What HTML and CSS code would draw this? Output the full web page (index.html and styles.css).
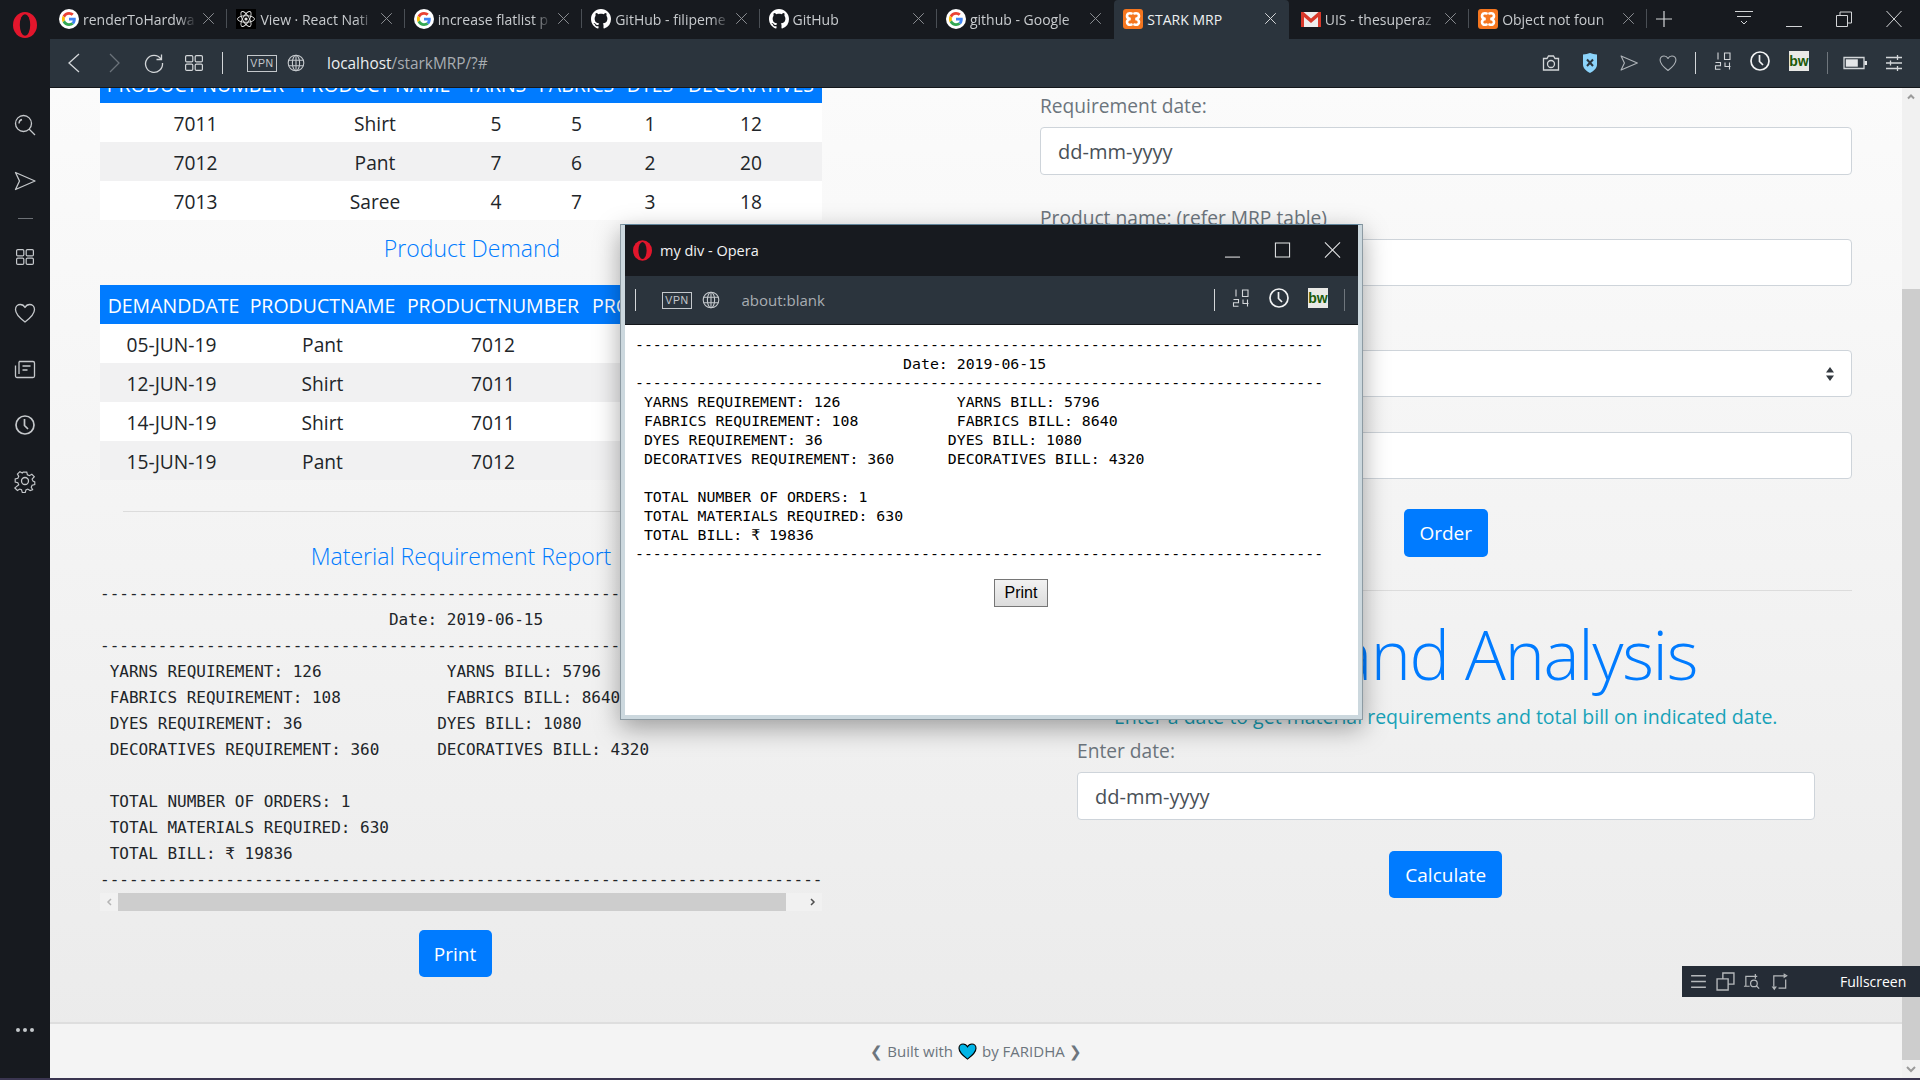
FILE: index.html
```html
<!DOCTYPE html>
<html lang="en">
<head>
    <meta charset="utf-8">
    <title>STARK MRP</title>
    <link rel="stylesheet" href="styles.css">
</head>
<body>
<svg class="defs" width="0" height="0">
    <symbol id="i-google" viewBox="-10 -10 68 68">
        <circle cx="24" cy="24" r="34" fill="#fff"/>
        <path fill="#EA4335" d="M24 9.5c3.54 0 6.71 1.22 9.21 3.6l6.85-6.85C35.9 2.38 30.47 0 24 0 14.62 0 6.51 5.38 2.56 13.22l7.98 6.19C12.43 13.72 17.74 9.5 24 9.5z"/>
        <path fill="#4285F4" d="M46.98 24.55c0-1.57-.15-3.09-.38-4.55H24v9.02h12.94c-.58 2.96-2.26 5.48-4.78 7.18l7.73 6c4.51-4.18 7.09-10.36 7.09-17.65z"/>
        <path fill="#FBBC05" d="M10.53 28.59c-.48-1.45-.76-2.99-.76-4.59s.27-3.14.76-4.59l-7.98-6.19C.92 16.46 0 20.12 0 24c0 3.88.92 7.54 2.56 10.78l7.97-6.19z"/>
        <path fill="#34A853" d="M24 48c6.48 0 11.93-2.13 15.89-5.81l-7.73-6c-2.15 1.45-4.92 2.3-8.16 2.3-6.26 0-11.57-4.22-13.47-9.91l-7.98 6.19C6.51 42.62 14.62 48 24 48z"/>
    </symbol>
    <symbol id="i-github" viewBox="0 0 16 16">
        <path fill="#fff" d="M8 0C3.58 0 0 3.58 0 8c0 3.54 2.29 6.53 5.47 7.59.4.07.55-.17.55-.38 0-.19-.01-.82-.01-1.49-2.01.37-2.53-.49-2.69-.94-.09-.23-.48-.94-.82-1.13-.28-.15-.68-.52-.01-.53.63-.01 1.08.58 1.23.82.72 1.21 1.87.87 2.33.66.07-.52.28-.87.51-1.07-1.78-.2-3.64-.89-3.64-3.95 0-.87.31-1.59.82-2.15-.08-.2-.36-1.02.08-2.12 0 0 .67-.21 2.2.82.64-.18 1.32-.27 2-.27.68 0 1.36.09 2 .27 1.53-1.04 2.2-.82 2.2-.82.44 1.1.16 1.92.08 2.12.51.56.82 1.27.82 2.15 0 3.07-1.87 3.75-3.65 3.95.29.25.54.73.54 1.48 0 1.07-.01 1.93-.01 2.2 0 .21.15.46.55.38A8.013 8.013 0 0016 8c0-4.42-3.58-8-8-8z"/>
    </symbol>
    <symbol id="i-react" viewBox="0 0 20 20">
        <rect width="20" height="20" fill="#000"/>
        <g fill="none" stroke="#e4e4e4" stroke-width=".9">
            <ellipse cx="10" cy="10" rx="8.5" ry="3.3"/>
            <ellipse cx="10" cy="10" rx="8.5" ry="3.3" transform="rotate(60 10 10)"/>
            <ellipse cx="10" cy="10" rx="8.5" ry="3.3" transform="rotate(120 10 10)"/>
        </g>
        <circle cx="10" cy="10" r="1.6" fill="#e4e4e4"/>
    </symbol>
    <symbol id="i-xampp" viewBox="0 0 20 20">
        <rect width="20" height="20" rx="3" fill="#f5761f"/>
        <path fill="none" stroke="#fff" stroke-width="2.6" stroke-linecap="round" d="M8.6 4.5C5.5 3.6 4 5 4 7c0 1.6 1.4 2.7 3.6 3-2.2.3-3.6 1.4-3.6 3 0 2 1.500 3.400 4.600 2.500M11.400 4.500C14.500 3.600 16 5 16 7c0 1.600-1.400 2.700-3.600 3 2.200.3 3.600 1.400 3.600 3 0 2-1.500 3.400-4.600 2.500"/>
    </symbol>
    <symbol id="i-gmail" viewBox="0 0 20 20">
        <rect y="3" width="20" height="15" fill="#eee"/>
        <path fill="#d8392b" d="M0 3h2.500L10 9.500 17.500 3H20v15h-3V8l-7 6-7-6v10H0z"/>
    </symbol>
    <symbol id="i-x" viewBox="0 0 16 16">
        <path fill="none" stroke="currentColor" stroke-width="1.200" d="M1.500 1.500l13 13M14.500 1.500l-13 13"/>
    </symbol>
    <symbol id="i-globe" viewBox="0 0 18 18">
        <g fill="none" stroke="currentColor" stroke-width="1.100">
            <circle cx="9" cy="9" r="7.800"/>
            <ellipse cx="9" cy="9" rx="3.600" ry="7.800"/>
            <path d="M1.500 6.300h15M1.500 11.700h15M9 1.200v15.600"/>
        </g>
    </symbol>
    <symbol id="i-clock" viewBox="0 0 24 24">
        <circle cx="12" cy="12" r="9" fill="none" stroke="currentColor" stroke-width="1.700"/>
        <path fill="none" stroke="currentColor" stroke-width="1.700" d="M11.500 6v6.500l3.500 3.500"/>
    </symbol>
    <symbol id="i-send" viewBox="0 0 24 24">
        <path fill="none" stroke="currentColor" stroke-width="1.300" stroke-linejoin="round" d="M2.500 3.500L22 12 2.500 20.500 6.500 12z"/>
    </symbol>
    <symbol id="i-heart" viewBox="0 0 24 24">
        <path fill="none" stroke="currentColor" stroke-width="1.300" stroke-linejoin="round" d="M12 21C6 16.500 2.500 13 2.500 8.500 2.500 5.300 5 3.500 7.300 3.500c2 0 3.700 1 4.700 3 1-2 2.700-3 4.700-3 2.300 0 4.800 1.800 4.800 5 0 4.500-3.500 8-9.500 12.500z"/>
    </symbol>
    <symbol id="i-grid" viewBox="0 0 18 16">
        <g fill="none" stroke="currentColor" stroke-width="1.200">
            <rect x=".6" y=".6" width="7.200" height="6.300" rx="1.200"/>
            <rect x="10.200" y=".6" width="7.200" height="6.300" rx="1.200"/>
            <rect x=".6" y="9.100" width="7.200" height="6.300" rx="1.200"/>
            <rect x="10.200" y="9.100" width="7.200" height="6.300" rx="1.200"/>
        </g>
    </symbol>
    <symbol id="i-1024" viewBox="0 0 18 18">
        <path fill="none" stroke="currentColor" stroke-width="1.100" d="M4 .5v7M10.500 1h5.500v6.500h-5.500zM1.500 10.500h5v3.200h-5v3.500h5M11 10.500v4h5.500M15.500 10.500v7"/>
    </symbol>
    <symbol id="i-opera" viewBox="0 0 24 26">
        <ellipse cx="12" cy="13" rx="12" ry="13" fill="#e2162c"/>
        <ellipse cx="12" cy="13" rx="5.200" ry="10.800" fill="#171a1f"/>
    </symbol>
</svg>

<div class="browser">
    <header class="tabstrip">
        <svg class="opera-logo"><use href="#i-opera"/></svg>
        <div class="tab"><svg class="fav"><use href="#i-google"/></svg><span class="tab-title">renderToHardwa</span><svg class="tab-x"><use href="#i-x"/></svg></div>
        <div class="tab"><svg class="fav"><use href="#i-react"/></svg><span class="tab-title">View · React Nati</span><svg class="tab-x"><use href="#i-x"/></svg></div>
        <div class="tab"><svg class="fav"><use href="#i-google"/></svg><span class="tab-title">increase flatlist p</span><svg class="tab-x"><use href="#i-x"/></svg></div>
        <div class="tab"><svg class="fav"><use href="#i-github"/></svg><span class="tab-title">GitHub - filipeme</span><svg class="tab-x"><use href="#i-x"/></svg></div>
        <div class="tab"><svg class="fav"><use href="#i-github"/></svg><span class="tab-title">GitHub</span><svg class="tab-x"><use href="#i-x"/></svg></div>
        <div class="tab no-sep"><svg class="fav"><use href="#i-google"/></svg><span class="tab-title">github - Google</span><svg class="tab-x"><use href="#i-x"/></svg></div>
        <div class="tab tab--active"><svg class="fav"><use href="#i-xampp"/></svg><span class="tab-title">STARK MRP</span><svg class="tab-x"><use href="#i-x"/></svg></div>
        <div class="tab"><svg class="fav"><use href="#i-gmail"/></svg><span class="tab-title">UIS - thesuperaz</span><svg class="tab-x"><use href="#i-x"/></svg></div>
        <div class="tab"><svg class="fav"><use href="#i-xampp"/></svg><span class="tab-title">Object not foun</span><svg class="tab-x"><use href="#i-x"/></svg></div>
        <svg class="new-tab" viewBox="0 0 16 16"><path d="M8 0v16M0 8h16"/></svg>
        <div class="win-controls">
            <svg class="ctl" viewBox="0 0 18 16"><path d="M0 .5h18M2 5.500h14M6 10l3 3 3-3"/></svg>
            <svg class="ctl" viewBox="0 0 18 16"><path d="M1 15.500h16"/></svg>
            <svg class="ctl" viewBox="0 0 18 16"><path d="M1.500 4.500h11v11h-11zM5 4.500V1h11.500v11h-4"/></svg>
            <svg class="ctl" viewBox="0 0 18 16"><path d="M1.500 0l15 16M16.500 0l-15 16"/></svg>
        </div>
    </header>

    <aside class="sidebar">
        <svg class="side-icon" viewBox="0 0 24 24"><circle cx="10.500" cy="10.500" r="8"/><path d="M16 16l6 6M6 10.500c0-2 1-3.500 3-4"/></svg>
        <svg class="side-icon"><use href="#i-send"/></svg>
        <div class="side-dash"></div>
        <svg class="side-icon side-icon--small"><use href="#i-grid"/></svg>
        <svg class="side-icon"><use href="#i-heart"/></svg>
        <svg class="side-icon" viewBox="0 0 24 24"><path d="M6 4.500h14a1.500 1.500 0 0 1 1.500 1.500v13a1.500 1.500 0 0 1-1.500 1.500H4A1.500 1.500 0 0 1 2.500 19V8.500M6 4.500V17M9.500 9h8M9.500 13h5"/></svg>
        <svg class="side-icon side-icon--clock"><use href="#i-clock"/></svg>
        <svg class="side-icon" viewBox="0 0 24 24"><circle cx="12" cy="12" r="3.500"/><path d="M10 2h4l.7 3 2.300 1 2.700-1.600 2.800 2.800L20 10l1 2.200 2 .8v3l-3 .8-1 2.300 1.600 2.700-2.800 1-2.700-1.700-2 .9-.8 2.900h-3.300l-.9-3-2-.8-2.600 1.500-2.900-2.800L5 16.200 4 14l-3-.7v-3.600l3-.7 1-2.200-1.500-2.600 2.800-2.700L9 3z" transform="translate(1.300 1.300) scale(.89)"/></svg>
        <div class="side-dots"><i></i><i></i><i></i></div>
    </aside>

    <main class="main">
        <nav class="toolbar">
            <svg class="tb-icon" viewBox="0 0 24 24"><path d="M17 3L7 12l10 9"/></svg>
            <svg class="tb-icon tb-icon--off" viewBox="0 0 24 24"><path d="M8 3l9 9-9 9"/></svg>
            <svg class="tb-icon" viewBox="0 0 24 24"><path d="M19 8A8.500 8.500 0 1 0 20.500 12M19.500 3.500V8.500H14.500"/></svg>
            <svg class="tb-icon tb-icon--grid"><use href="#i-grid"/></svg>
            <span class="tb-sep"></span>
            <span class="vpn-badge">VPN</span>
            <svg class="tb-globe"><use href="#i-globe"/></svg>
            <div class="url"><b>localhost</b>/starkMRP/?#</div>
            <div class="tb-right">
                <svg class="tb-icon" viewBox="0 0 24 24"><path d="M4.500 7.500h3.500l1.500-2.500h5l1.500 2.500h3.500v11.500h-15z"/><circle cx="12" cy="13" r="3.500"/></svg>
                <svg class="tb-icon tb-shield" viewBox="0 0 24 24"><path d="M5 3.500c3 0 4.500-1 7-1.500 2.500.5 4 1.500 7 1.500v10c0 4-3.500 6.500-7 8.500-3.500-2-7-4.500-7-8.500z"/><path class="shield-x" d="M9 8.500l6 6.500M15 8.500l-6 6.500"/></svg>
                <svg class="tb-small"><use href="#i-send"/></svg>
                <svg class="tb-small"><use href="#i-heart"/></svg>
                <span class="tb-sep"></span>
                <svg class="tb-1024"><use href="#i-1024"/></svg>
                <svg class="tb-clock"><use href="#i-clock"/></svg>
                <span class="bw-badge">bw</span>
                <span class="tb-sep tb-sep--dim"></span>
                <svg class="tb-icon tb-battery" viewBox="0 0 24 24"><path d="M1 6.500h20v11H1z"/><rect class="fill" x="2.800" y="8.300" width="12" height="7.400"/><rect class="fill" x="21.500" y="10" width="2.500" height="4"/></svg>
                <svg class="tb-icon" viewBox="0 0 24 24"><path d="M4 6.500h16M4 12h16M4 17.500h16M15.500 4v5M8.500 9.500v5M15.500 15v5"/></svg>
            </div>
        </nav>

        <div class="page">
            <div class="page-scroll">
                <div class="columns">
                    <section class="col-left">
                        <table class="data data--mrp">
                            <colgroup><col class="c1"><col class="c2"><col class="c3"><col class="c4"><col class="c5"><col class="c6"></colgroup>
                            <tr><th>PRODUCT NUMBER</th><th>PRODUCT NAME</th><th>YARNS</th><th>FABRICS</th><th>DYES</th><th>DECORATIVES</th></tr>
                            <tr><td>7011</td><td>Shirt</td><td>5</td><td>5</td><td>1</td><td>12</td></tr>
                            <tr><td>7012</td><td>Pant</td><td>7</td><td>6</td><td>2</td><td>20</td></tr>
                            <tr><td>7013</td><td>Saree</td><td>4</td><td>7</td><td>3</td><td>18</td></tr>
                        </table>

                        <h3 class="section-title title-demand">Product Demand</h3>

                        <table class="data data--demand">
                            <colgroup><col class="d1"><col class="d2"><col class="d3"><col class="d4"></colgroup>
                            <tr><th>DEMANDDATE</th><th>PRODUCTNAME</th><th>PRODUCTNUMBER</th><th class="th-left">PRODUCT</th></tr>
                            <tr><td>05-JUN-19</td><td>Pant</td><td>7012</td><td></td></tr>
                            <tr><td>12-JUN-19</td><td>Shirt</td><td>7011</td><td></td></tr>
                            <tr><td>14-JUN-19</td><td>Shirt</td><td>7011</td><td></td></tr>
                            <tr><td>15-JUN-19</td><td>Pant</td><td>7012</td><td></td></tr>
                        </table>

                        <hr class="rule rule--left">

                        <h3 class="section-title title-report">Material Requirement Report</h3>

                        <pre class="report">------------------------------------------------------------------------------
                              Date: 2019-06-15
------------------------------------------------------------------------------
 YARNS REQUIREMENT: 126             YARNS BILL: 5796
 FABRICS REQUIREMENT: 108           FABRICS BILL: 8640
 DYES REQUIREMENT: 36              DYES BILL: 1080
 DECORATIVES REQUIREMENT: 360      DECORATIVES BILL: 4320

 TOTAL NUMBER OF ORDERS: 1
 TOTAL MATERIALS REQUIRED: 630
 TOTAL BILL: ₹ 19836
------------------------------------------------------------------------------</pre>
                        <div class="hscroll">
                            <svg class="hscroll-arrow hscroll-arrow--off" viewBox="0 0 18 18"><path d="M11 6l-3 3 3 3"/></svg>
                            <div class="hscroll-thumb"></div>
                            <svg class="hscroll-arrow" viewBox="0 0 18 18"><path d="M7 6l3 3-3 3"/></svg>
                        </div>
                        <div class="btn-row"><button class="btn btn--print">Print</button></div>
                    </section>

                    <section class="col-right">
                        <div class="group">
                            <label>Requirement date:</label>
                            <input class="field" type="text" value="dd-mm-yyyy">
                        </div>
                        <div class="group">
                            <label>Product name: (refer MRP table)</label>
                            <input class="field field--thin" type="text">
                        </div>
                        <div class="field field--thin field--select">
                            <svg viewBox="0 0 10 16"><path d="M5 1l4 5.500H1zM5 15L1 9.500h8z"/></svg>
                        </div>
                        <input class="field field--thin field--last" type="text">
                        <div class="btn-row btn-row--order"><button class="btn btn--order">Order</button></div>
                        <hr class="rule rule--right">
                        <div class="jumbo">
                            <h1>Demand Analysis</h1>
                            <p class="lead">Enter a date to get material requirements and total bill on indicated date.</p>
                            <div class="group group--inset">
                                <label>Enter date:</label>
                                <input class="field" type="text" value="dd-mm-yyyy">
                            </div>
                            <div class="btn-row btn-row--calc"><button class="btn btn--calc">Calculate</button></div>
                        </div>
                    </section>
                </div>
                <footer class="footer">❮ Built with <svg class="footer-heart" viewBox="0 0 20 18"><path d="M10 17C5 13 1 10 1 5.500 1 2.800 3 1 5.300 1 7.300 1 9 2.200 10 4c1-1.800 2.700-3 4.700-3C17 1 19 2.800 19 5.500 19 10 15 13 10 17z"/></svg> by FARIDHA ❯</footer>
            </div>
            <div class="vscroll">
                <svg class="vscroll-arrow" viewBox="0 0 18 18"><path d="M6 10.500l3-3 3 3"/></svg>
                <div class="vscroll-gap"></div>
                <div class="vscroll-thumb"></div>
                <svg class="vscroll-arrow" viewBox="0 0 18 18"><path d="M5 7l4 4 4-4"/></svg>
            </div>
        </div>
    </main>
    <div class="taskbar-edge"></div>

    <div class="fullscreen-bar">
        <svg viewBox="0 0 18 18"><path d="M2 3.500h14M2 9h14M2 14.500h14"/></svg>
        <svg viewBox="0 0 18 18"><path d="M1 6.500h10.500V17H1zM6.500 6.500V1H17v10.500h-5.500"/></svg>
        <svg viewBox="0 0 20 18"><path d="M3 14V3.500h12M13 1v5M1 14h6"/><circle cx="11.500" cy="11" r="3.500"/><path d="M14 13.500l3 3"/></svg>
        <svg viewBox="0 0 20 18"><path d="M4 14V3h11M3 15l1.500 2L6 15zM15 1.500L17.500 3 15 4.500zM9 16h7.500V7"/></svg>
        <span>Fullscreen</span>
    </div>

    <div class="popup">
        <div class="popup-title">
            <svg class="popup-logo"><use href="#i-opera"/></svg>
            <span>my div - Opera</span>
            <div class="popup-controls">
                <svg viewBox="0 0 18 16"><path d="M1 15.500h16"/></svg>
                <svg viewBox="0 0 18 16"><path d="M1.500 .5h15v15h-15z"/></svg>
                <svg viewBox="0 0 18 16"><path d="M1 0l16 16M17 0L1 16"/></svg>
            </div>
        </div>
        <div class="popup-toolbar">
            <span class="tb-sep"></span>
            <span class="vpn-badge">VPN</span>
            <svg class="tb-globe"><use href="#i-globe"/></svg>
            <div class="popup-url">about:blank</div>
            <span class="tb-sep popup-sep-right"></span>
            <svg class="tb-1024"><use href="#i-1024"/></svg>
            <svg class="tb-clock"><use href="#i-clock"/></svg>
            <span class="bw-badge">bw</span>
            <span class="tb-sep tb-sep--dim"></span>
        </div>
        <div class="popup-body">
            <pre class="popup-report">-----------------------------------------------------------------------------
                              Date: 2019-06-15
-----------------------------------------------------------------------------
 YARNS REQUIREMENT: 126             YARNS BILL: 5796
 FABRICS REQUIREMENT: 108           FABRICS BILL: 8640
 DYES REQUIREMENT: 36              DYES BILL: 1080
 DECORATIVES REQUIREMENT: 360      DECORATIVES BILL: 4320

 TOTAL NUMBER OF ORDERS: 1
 TOTAL MATERIALS REQUIRED: 630
 TOTAL BILL: ₹ 19836
-----------------------------------------------------------------------------</pre>
            <button class="popup-print">Print</button>
        </div>
    </div>
</div>
</body>
</html>
```

FILE: styles.css
```css
html, body {
    margin: 0;
    height: 100%;
    overflow: hidden;
    font-family: "Open Sans", "Noto Sans", sans-serif;
    color: #212529;
}
.defs {
    position: absolute;
}
.browser {
    position: relative;
    display: grid;
    grid-template-columns: 50px 1fr;
    grid-template-rows: 39px 1fr 2px;
    width: 1920px;
    height: 1080px;
    background: #171a1f;
}

/* tab strip */
.tabstrip {
    grid-column: 1 / 3;
    display: flex;
    align-items: flex-start;
    padding-left: 50px;
    position: relative;
    background: #171a1f;
}
.opera-logo {
    position: absolute;
    left: 13px;
    top: 12px;
    width: 24px;
    height: 26px;
}
.tab {
    display: flex;
    align-items: center;
    box-sizing: border-box;
    flex: none;
    width: 177.4px;
    height: 39px;
    padding: 0 12px 0 9px;
    position: relative;
    color: #c8cbce;
    font-size: 14px;
}
.tab::after {
    content: "";
    position: absolute;
    right: 0;
    top: 9px;
    height: 19px;
    width: 1px;
    background: #4a4f55;
}
.tab.no-sep::after, .tab--active::after {
    display: none;
}
.tab--active {
    background: #2b343d;
    border-radius: 4px 4px 0 0;
    color: #eef0f1;
    width: 175px;
    margin-right: 2.4px;
}
.fav {
    flex: none;
    width: 20px;
    height: 20px;
    margin-top: -2px;
}
.tab-title {
    flex: 1;
    margin-left: 4px;
    overflow: hidden;
    white-space: nowrap;
    margin-top: -1px;
    -webkit-mask-image: linear-gradient(90deg, #000 82%, transparent 98%);
    mask-image: linear-gradient(90deg, #000 82%, transparent 98%);
}
.tab--active .tab-title {
    -webkit-mask-image: none;
    mask-image: none;
}
.tab-x {
    flex: none;
    width: 13px;
    height: 13px;
    margin-left: 3px;
    margin-top: -2px;
    color: #8d9094;
}
.tab--active .tab-x {
    color: #d8dadc;
}
.new-tab {
    width: 16px;
    height: 16px;
    margin: 11px 0 0 9px;
    fill: none;
    stroke: #d3d5d7;
    stroke-width: 1.2;
}
.win-controls {
    margin-left: auto;
    margin-right: 17px;
    margin-top: 11px;
    display: flex;
    gap: 32px;
}
.ctl {
    width: 18px;
    height: 16px;
    fill: none;
    stroke: #d3d5d7;
    stroke-width: 1;
}

/* left sidebar */
.sidebar {
    display: flex;
    flex-direction: column;
    align-items: center;
    padding-top: 74px;
    padding-bottom: 46px;
    background: #171a1f;
    color: #c5c8cb;
}
.side-icon {
    width: 24px;
    height: 24px;
    margin-bottom: 32px;
    fill: none;
    stroke: #c5c8cb;
    stroke-width: 1.300;
    flex: none;
}
.side-icon--small {
    width: 18px;
    stroke: none;
}
.side-icon--clock {
    stroke: none;
}
.side-dash {
    width: 15px;
    height: 1px;
    margin: -7px 0 26px;
    background: #6d7176;
}
.side-dots {
    margin-top: auto;
    display: flex;
    gap: 3px;
}
.side-dots i {
    width: 4px;
    height: 4px;
    border-radius: 2px;
    background: #c5c8cb;
}

/* main toolbar */
.main {
    display: flex;
    flex-direction: column;
    min-width: 0;
    min-height: 0;
}
.toolbar {
    display: flex;
    align-items: center;
    flex: none;
    box-sizing: border-box;
    height: 49px;
    padding: 0 14px 0 12px;
    gap: 16px;
    background: #2b343d;
    border-bottom: 1px solid #14171b;
    color: #d3d6d9;
}
.tb-icon {
    width: 24px;
    height: 24px;
    fill: none;
    stroke: #d3d6d9;
    stroke-width: 1.300;
    flex: none;
}
.tb-icon--off {
    stroke: #6b727a;
}
.tb-icon--grid {
    width: 18px;
    height: 16px;
    margin: 0 3px;
    stroke: none;
}
.tb-sep {
    flex: none;
    width: 1px;
    height: 22px;
    background: #d3d6d9;
}
.tb-sep--dim {
    background: #6f767d;
}
.vpn-badge {
    flex: none;
    box-sizing: border-box;
    width: 30px;
    height: 17px;
    margin-left: 8px;
    border: 1px solid #c4c8cc;
    color: #c4c8cc;
    font-family: "Liberation Sans", sans-serif;
    font-size: 10.5px;
    letter-spacing: .6px;
    line-height: 15px;
    text-align: center;
}
.tb-globe {
    flex: none;
    width: 18px;
    height: 18px;
    margin-left: -6px;
    color: #c4c8cc;
}
.url {
    margin-left: 6px;
    font-size: 15.4px;
    color: #a8adb2;
    white-space: nowrap;
}
.url b {
    font-weight: 400;
    color: #eceef0;
}
.tb-right {
    display: flex;
    align-items: center;
    margin-left: auto;
    gap: 15px;
}
.tb-shield {
    fill: #8cd4fb;
    stroke: none;
}
.shield-x {
    fill: none;
    stroke: #2b343d;
    stroke-width: 2;
}
.tb-small {
    flex: none;
    width: 20px;
    height: 20px;
    margin: 0 2px;
    color: #aeb3b8;
}
.tb-1024 {
    flex: none;
    width: 18px;
    height: 18px;
    margin: -4px 1px 0 3px;
    color: #d3d6d9;
}
.tb-clock {
    flex: none;
    width: 24px;
    height: 24px;
    margin-top: -4px;
    color: #f2f3f4;
}
.bw-badge {
    flex: none;
    box-sizing: border-box;
    width: 20px;
    height: 20px;
    margin: -4px 3px 0 2px;
    background: #e9e9e6;
    color: #1c5a0a;
    font-family: "Liberation Sans", sans-serif;
    font-weight: 700;
    font-size: 14px;
    line-height: 20px;
    text-align: center;
}
.tb-battery .fill {
    fill: #e4e6e8;
    stroke: none;
}

/* page */
.page {
    flex: 1;
    display: flex;
    min-height: 0;
}
.page-scroll {
    flex: 1;
    min-width: 0;
    display: flex;
    flex-direction: column;
    overflow: hidden;
    background: linear-gradient(#fbfbfb, #ebebeb 96%);
}
.columns {
    flex: 1;
    display: flex;
    min-height: 0;
}
.col-left {
    flex: none;
    width: 722px;
    margin-left: 50px;
    margin-top: -24px;
}
.col-right {
    flex: none;
    width: 811.5px;
    margin-left: 218px;
    padding-top: 4px;
}
.data {
    width: 722px;
    table-layout: fixed;
    border-collapse: collapse;
    background: #fff;
    font-size: 19.2px;
}
.data th, .data td {
    box-sizing: border-box;
    height: 39px;
    padding: 1px 0 0;
    text-align: center;
    font-weight: 400;
    white-space: nowrap;
    overflow: hidden;
}
.data th {
    background: #007bff;
    color: #fff;
    font-size: 19.5px;
}
.data--demand th:first-child {
    padding-left: 4px;
}
.th-left {
    text-align: left !important;
    padding-left: 8px !important;
}
.data tr:nth-child(odd) td {
    background: #f1f1f2;
}
.data tr:nth-child(even) td {
    background: #fff;
}
.c1 { width: 191px; }
.c2 { width: 168px; }
.c3 { width: 74px; }
.c4 { width: 87px; }
.c5 { width: 60px; }
.c6 { width: 142px; }
.d1 { width: 143px; }
.d2 { width: 159px; }
.d3 { width: 182px; }
.d4 { width: 238px; }
.section-title {
    margin: 0;
    font-weight: 300;
    font-size: 23px;
    line-height: 36px;
    color: #007bff;
    text-align: center;
}
.title-demand {
    margin: 10px 0 19px;
    margin-left: -1px;
    width: 746px;
}
.title-report {
    margin: 26px 0 7px;
}
.rule {
    border: 0;
    border-top: 1px solid #dcdcdc;
    margin: 0;
}
.rule--left {
    margin: 31px 0 0 23px;
}
.report {
    margin: 0;
    height: 312px;
    overflow: hidden;
    font-family: "DejaVu Sans Mono", monospace;
    font-size: 16px;
    line-height: 26px;
    color: #212529;
}
.hscroll {
    display: flex;
    height: 18px;
    background: #f1f1f1;
}
.hscroll-arrow {
    flex: none;
    width: 18px;
    height: 18px;
    fill: none;
    stroke: #505050;
    stroke-width: 1.500;
}
.hscroll-arrow--off {
    stroke: #b5b5b5;
}
.hscroll-thumb {
    width: 668px;
    background: #cdcdcd;
}
.hscroll-arrow:last-child {
    margin-left: auto;
}
.btn-row {
    display: flex;
    justify-content: center;
}
.col-left .btn-row {
    margin-top: 19px;
}
.btn {
    border: 0;
    border-radius: 5px;
    background: #007bff;
    color: #fff;
    font: inherit;
    font-size: 19px;
    height: 47px;
    padding: 0;
}
.btn--print { width: 73px; margin-left: -12px; }
.btn--order { width: 84px; height: 48px; }
.btn--calc { width: 113px; }

/* right form */
label {
    display: block;
    font-size: 19.2px;
    line-height: 28px;
    color: #6c757d;
    margin-bottom: 7px;
}
.group {
    margin-bottom: 29px;
}
.field {
    display: block;
    box-sizing: border-box;
    width: 100%;
    height: 48px;
    padding: 0 17px;
    border: 1px solid #ced4da;
    border-radius: 4px;
    background: #fff;
    font: inherit;
    font-size: 20px;
    color: #495057;
}
.field--thin {
    height: 47px;
}
.field--select {
    margin-top: 64px;
    display: flex;
    align-items: center;
    justify-content: flex-end;
    padding-right: 16px;
}
.field--select svg {
    width: 10px;
    height: 16px;
    fill: #343a40;
}
.field--last {
    margin-top: 35px;
}
.btn-row--order {
    margin-top: 30px;
}
.rule--right {
    margin-top: 33px;
}
.jumbo {
    text-align: center;
}
.jumbo h1 {
    margin: 15px 0 0;
    font-weight: 300;
    font-size: 68px;
    letter-spacing: -1.300px;
    line-height: 96px;
    color: #007bff;
}
.lead {
    margin: 0;
    font-size: 19.5px;
    line-height: 30px;
    color: #17a2b8;
}
.group--inset {
    margin: 5px 37px 0;
    text-align: left;
}
.btn-row--calc {
    margin-top: 31px;
}
.footer {
    flex: none;
    display: flex;
    align-items: center;
    justify-content: center;
    gap: 5px;
    box-sizing: border-box;
    height: 56px;
    border-top: 2px solid #dedede;
    background: #f4f4f4;
    font-size: 15px;
    color: #6c757d;
}
.footer-heart {
    width: 19px;
    height: 17px;
    fill: #00b4e6;
    stroke: #000;
    stroke-width: 1.200;
}

/* page scrollbar */
.vscroll {
    flex: none;
    display: flex;
    flex-direction: column;
    width: 18px;
    background: #f1f1f1;
}
.vscroll-arrow {
    flex: none;
    width: 18px;
    height: 18px;
    fill: none;
    stroke: #9a9a9a;
    stroke-width: 2;
}
.vscroll-gap {
    flex: none;
    height: 183px;
}
.vscroll-thumb {
    flex: 1;
    background: #cdcdcd;
}
.taskbar-edge {
    grid-column: 1 / 3;
    background: #3a3550;
}

/* video popout controls */
.fullscreen-bar {
    position: absolute;
    left: 1682px;
    top: 966px;
    width: 238px;
    height: 31px;
    box-sizing: border-box;
    display: flex;
    align-items: center;
    gap: 8px;
    padding-left: 7px;
    background: #252c36;
    color: #fff;
    font-size: 14px;
}
.fullscreen-bar svg {
    flex: none;
    width: 19px;
    height: 19px;
    fill: none;
    stroke: #b5b8bb;
    stroke-width: 1.300;
}
.fullscreen-bar span {
    margin-left: 43px;
}

/* popup window */
.popup {
    position: absolute;
    left: 620px;
    top: 224px;
    box-sizing: border-box;
    width: 743px;
    height: 496px;
    display: flex;
    flex-direction: column;
    border: 5px solid #ccd8de;
    border-top-width: 1px;
    border-top-color: #6aa5c9;
    outline: 1px solid rgba(90, 105, 115, .55);
    outline-offset: -1px;
    box-shadow: 0 8px 24px rgba(0, 0, 0, .35);
    background: #fff;
}
.popup-title {
    flex: none;
    height: 51px;
    display: flex;
    align-items: center;
    padding-left: 8px;
    background: #171a1f;
    color: #f2f3f4;
    font-size: 14.5px;
}
.popup-logo {
    width: 19px;
    height: 21px;
    margin-right: 8px;
}
.popup-controls {
    margin-left: auto;
    margin-right: 17px;
    margin-top: -1px;
    display: flex;
    gap: 33px;
}
.popup-controls svg {
    width: 17px;
    height: 16px;
    fill: none;
    stroke: #e6e7e8;
    stroke-width: 1.100;
}
.popup-toolbar {
    flex: none;
    box-sizing: border-box;
    height: 49px;
    display: flex;
    align-items: center;
    gap: 16px;
    padding-left: 10px;
    background: #2b343d;
    border-bottom: 1px solid #14171b;
}
.popup-toolbar .vpn-badge {
    margin-left: 10px;
}
.popup-url {
    margin-left: 5.500px;
    font-size: 15px;
    color: #a8adb2;
}
.popup-sep-right {
    margin-left: 373px;
}
.popup-toolbar .tb-1024 {
    margin-left: 1px;
}
.popup-toolbar .bw-badge {
    margin: -4px 0 0 1px;
}
.popup-body {
    flex: 1;
    padding: 11px 0 0 10px;
}
.popup-report {
    margin: 0;
    font-family: "DejaVu Sans Mono", monospace;
    font-size: 14.85px;
    line-height: 19px;
    color: #000;
}
.popup-print {
    display: block;
    box-sizing: border-box;
    margin: 15px 0 0 359px;
    width: 54px;
    height: 28px;
    padding: 0;
    border: 1px solid #767676;
    background: linear-gradient(#f2f2f2, #dcdcdc);
    font-family: "Liberation Sans", sans-serif;
    font-size: 16px;
    color: #000;
}
```
